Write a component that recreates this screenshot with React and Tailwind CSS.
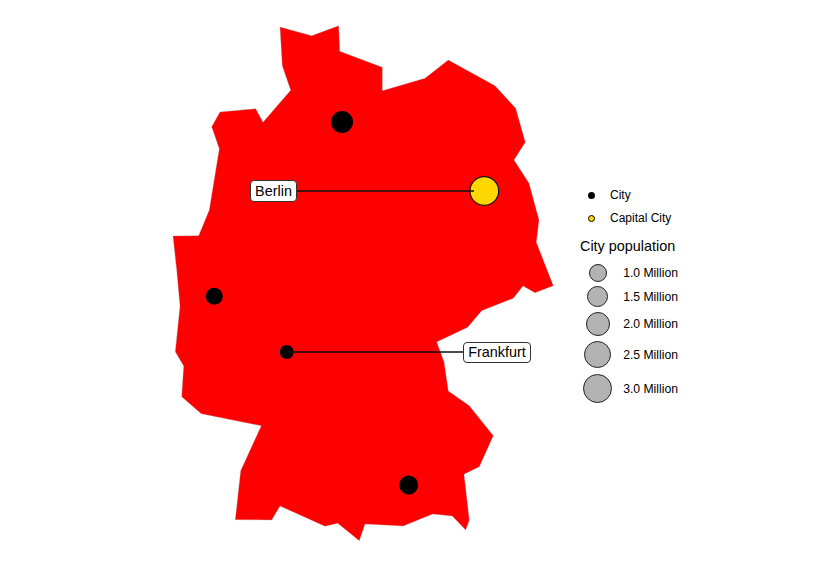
const germany =
  "280,27 311.7,35.7 338.7,25.7 339.7,51.3 382.3,67.3 382.3,90.7 425,78.3 448.3,60 495,85.7 515.7,108.3 525.3,142.3 514,160 529,183.3 539,220 536.3,242.3 553.3,285.7 535,292.7 523,286 513.3,298.3 481.7,310.7 467.7,327.3 436.7,342 444,361.7 448.3,391 469.3,405.7 493.3,435.7 479.3,466.7 464,474.3 469.3,520 465.7,530 452.3,516 432.7,514 403.3,526 365,524 359.3,540.7 337.7,523.3 325,526.3 280,506 271.7,520 235.3,519.7 240.7,470.7 261.3,425.7 201.3,413.7 181.7,396.7 183.7,366 175.3,351.7 180,306 176.7,270 173,236 198.7,235.7 209.3,210 219.3,148.7 211.7,126.7 220,112 255.7,108.7 263,122.3 290.7,90.3 282.3,65.7";

const populations = [
  { label: "1.0 Million", size: "size-[18px]", gap: "mt-[10px]" },
  { label: "1.5 Million", size: "size-[21px]", gap: "mt-[4px]" },
  { label: "2.0 Million", size: "size-[24px]", gap: "mt-[5px]" },
  { label: "2.5 Million", size: "size-[27px]", gap: "mt-[5px]" },
  { label: "3.0 Million", size: "size-[29px]", gap: "mt-[6px]" },
];

const MapLabel = ({ text, className }) => (
  <div
    className={`absolute flex items-center justify-center bg-white border border-[#333] rounded-[4px] text-[14.4px] leading-none text-black ${className}`}
  >
    {text}
  </div>
);

export default function App() {
  return (
    <div className="flex w-[833px] h-[567px] bg-white font-['Liberation_Sans',Arial,sans-serif] overflow-hidden">
      {/* Map */}
      <div className="relative w-[570px] h-[567px] shrink-0">
        <svg width="570" height="567" viewBox="0 0 570 567" className="block">
          <polygon points={germany} fill="#ff0000" stroke="#999" strokeWidth="0.3" />
          <circle cx="342" cy="122" r="11" fill="#000" />
          <circle cx="214.3" cy="296.3" r="8.5" fill="#000" />
          <circle cx="286.7" cy="352" r="7" fill="#000" />
          <circle cx="408.7" cy="485" r="9.5" fill="#000" />
          <circle cx="484.3" cy="191" r="14.4" fill="#ffd700" stroke="#111" strokeWidth="1.2" />
          {/* leader lines sit on top of the capital marker */}
          <line x1="297" y1="191" x2="474" y2="191" stroke="#111" strokeWidth="1.5" />
          <line x1="287" y1="352" x2="463" y2="352" stroke="#111" strokeWidth="1.5" />
        </svg>
        <MapLabel text="Berlin" className="left-[250px] top-[180px] w-[47px] h-[22px]" />
        <MapLabel text="Frankfurt" className="left-[463px] top-[342px] w-[68px] h-[21px]" />
      </div>

      {/* Legend */}
      <div className="flex flex-col pt-[187px] w-[130px] text-black">
        <div className="flex items-center h-4">
          <span className="size-[7px] ml-[18px] rounded-full bg-black" />
          <span className="ml-[15px] text-[12px]">City</span>
        </div>
        <div className="flex items-center h-4 mt-[7px]">
          <span className="size-[7px] ml-[18px] rounded-full bg-[#ffd700] border border-black" />
          <span className="ml-[15px] text-[12px]">Capital City</span>
        </div>
        <div className="h-4 mt-3 pl-[10px] text-[14.4px] leading-4 whitespace-nowrap">City population</div>
        {populations.map((p) => (
          <div key={p.label} className={`flex items-center w-[108px] ${p.gap}`}>
            <div className="flex justify-center w-[55px] shrink-0 -mr-[4px]">
              <span className={`block rounded-full bg-[#b3b3b3] border border-[#222] ${p.size}`} />
            </div>
            <span className="ml-auto text-[12.2px] leading-[12px] whitespace-nowrap">{p.label}</span>
          </div>
        ))}
      </div>
    </div>
  );
}
